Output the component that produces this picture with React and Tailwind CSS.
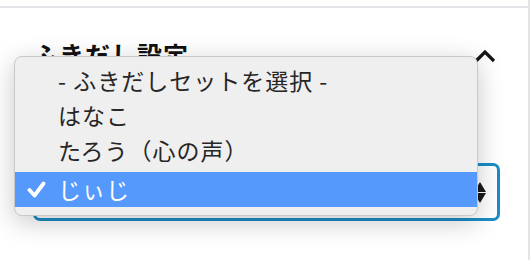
import React from 'react';

const options = [
  { label: '- ふきだしセットを選択 -' },
  { label: 'はなこ' },
  { label: 'たろう（心の声）' },
  { label: 'じぃじ', selected: true },
];

function Check() {
  return (
    <svg viewBox="0 0 19 17" className="w-[19px] h-[17px]">
      <path d="M2.5 9 L7.5 14.5 L16.5 2.5" fill="none" stroke="white" strokeWidth="3.8" strokeLinecap="round" strokeLinejoin="round" />
    </svg>
  );
}

export default function App() {
  return (
    <div className="relative w-[532px] h-[260px] overflow-hidden bg-white font-['Noto_Sans_CJK_JP',sans-serif] text-[#262626]">
      <div className="w-[530px] h-full border-r-2 border-[#e3e3e8]">
        <div className="h-[8px] border-b-2 border-[#e3e3e8]" />

        <div className="pl-[33px] pr-[28px]">
          {/* 見出し */}
          <div className="flex items-center justify-between mt-[32px] h-[28px]">
            <h2 className="text-[25px] font-bold leading-none text-[#111] tracking-[1px]">ふきだし設定</h2>
            <svg viewBox="0 0 22 14" className="w-[22px] h-[14px] mr-[4px] mt-[4px]">
              <path d="M2 12 L11 3 L20 12" fill="none" stroke="#151515" strokeWidth="3.2" />
            </svg>
          </div>

          {/* セレクト */}
          <div className="mt-[95px] h-[58px] rounded-[7px] border-[3px] border-[#1a8dc6] flex items-center justify-end pr-[11px]">
            <div className="flex flex-col gap-[1px]">
              <svg viewBox="0 0 12 10" className="w-[12px] h-[10px]">
                <path d="M6 0 L12 10 L0 10 Z" fill="#1a1a1a" />
              </svg>
              <svg viewBox="0 0 12 10" className="w-[12px] h-[10px]">
                <path d="M0 0 L12 0 L6 10 Z" fill="#1a1a1a" />
              </svg>
            </div>
          </div>
        </div>
      </div>

      {/* ドロップダウン */}
      <div className="absolute left-[14px] top-[56px] w-[464px] h-[160px] rounded-[8px] bg-[#efefef] border border-[#c9c9c9] shadow-[0_6px_26px_rgba(0,0,0,0.22)] pt-[6px] overflow-hidden">
        {options.map((o, i) => (
          <div
            key={i}
            className={
              o.selected
                ? 'h-[35px] mt-[4px] flex items-center bg-[#5599fc] text-white text-[23px]'
                : 'h-[35px] flex items-center text-[23px]'
            }
          >
            <span className="w-[43px] flex justify-start pl-[12px]">{o.selected && <Check />}</span>
            <span className="leading-none tracking-[1px]">{o.label}</span>
          </div>
        ))}
      </div>
    </div>
  );
}
